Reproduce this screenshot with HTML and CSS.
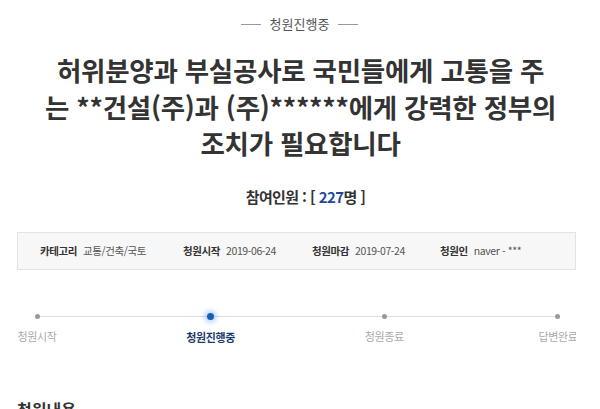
FILE: index.html
```html
<!DOCTYPE html>
<html lang="ko">
<head>
<meta charset="utf-8">
<link rel="stylesheet" href="styles.css">
</head>
<body>
<div class="page">
  <div class="status"><span class="dash"></span><span class="status-text">청원진행중</span><span class="dash"></span></div>
  <h1 class="title">허위분양과 부실공사로 국민들에게 고통을 주<br>는 **건설(주)과 (주)******에게 강력한 정부의<br>조치가 필요합니다</h1>
  <div class="count">참여인원 : [ <span class="num">227</span>명 ]</div>
  <div class="info">
    <div class="item item-cat"><span class="label">카테고리</span><span class="value">교통/건축/국토</span></div>
    <div class="item item-start"><span class="label">청원시작</span><span class="value">2019-06-24</span></div>
    <div class="item item-end"><span class="label">청원마감</span><span class="value">2019-07-24</span></div>
    <div class="item"><span class="label">청원인</span><span class="value">naver - ***</span></div>
  </div>
  <div class="progress">
    <div class="step"><span class="dot"></span><span class="step-label">청원시작</span></div>
    <div class="step active"><span class="dot"></span><span class="step-label">청원진행중</span></div>
    <div class="step"><span class="dot"></span><span class="step-label">청원종료</span></div>
    <div class="step"><span class="dot"></span><span class="step-label">답변완료</span></div>
  </div>
  <h2 class="section">청원내용</h2>
</div>
</body>
</html>
```

FILE: styles.css
```css
html, body {
  margin: 0;
  padding: 0;
  background: #fff;
  overflow: hidden;
}
body {
  font-family: "Noto Sans CJK KR", "Noto Sans", sans-serif;
  color: #333;
}
.page {
  width: 559px;
  margin-left: 17px;
  height: 409px;
  overflow: hidden;
}
.status {
  display: flex;
  align-items: center;
  justify-content: center;
  gap: 9px;
  padding-top: 14px;
  height: 20px;
  margin-left: 6px;
}
.dash {
  width: 20px;
  height: 1px;
  background: #999;
}
.status-text {
  font-size: 13px;
  color: #555;
  line-height: 20px;
}
.title {
  margin: 18px 0 0 0;
  text-align: center;
  font-size: 26.5px;
  font-weight: 700;
  line-height: 36.5px;
  letter-spacing: -0.25px;
  color: #333;
  margin-left: 8px;
}
.count {
  margin-top: 23px;
  text-align: center;
  font-size: 15px;
  font-weight: 700;
  line-height: 24px;
  letter-spacing: -0.6px;
  color: #333;
  margin-left: 18px;
}
.num {
  color: #1f4a9a;
}
.info {
  margin-top: 23px;
  height: 36px;
  border: 1px solid #e3e3e3;
  background: #f7f7f7;
  display: flex;
  align-items: center;
  padding-left: 22px;
  font-size: 10.5px;
  letter-spacing: -0.4px;
}
.item {
  display: flex;
  gap: 6px;
}
.item-cat { width: 143px; }
.item-start { width: 129px; }
.item-end { width: 128px; }
.label {
  font-weight: 700;
  color: #333;
}
.value {
  color: #555;
}
.progress {
  position: relative;
  display: flex;
  justify-content: space-between;
  margin: 42px 0 0 -10px;
  width: 581px;
}
.progress::before {
  content: "";
  position: absolute;
  left: 30px;
  right: 30px;
  top: 4px;
  height: 1px;
  background: #ddd;
}
.step {
  position: relative;
  width: 60px;
  display: flex;
  flex-direction: column;
  align-items: center;
}
.dot {
  width: 5px;
  height: 5px;
  margin-top: 2px;
  border-radius: 50%;
  background: #999;
}
.step.active .dot {
  width: 7px;
  height: 7px;
  margin-top: 1px;
  background: #1a5fb4;
  box-shadow: 0 0 4px 3px rgba(80, 150, 255, 0.35);
}
.step-label {
  margin-top: 9px;
  font-size: 11px;
  color: #aaa;
  white-space: nowrap;
  letter-spacing: -0.4px;
}
.step.active .step-label {
  color: #1d3b6c;
  font-weight: 700;
}
.section {
  margin: 52px 0 0 0;
  font-size: 16px;
  font-weight: 700;
  line-height: 24px;
  color: #333;
}
```
